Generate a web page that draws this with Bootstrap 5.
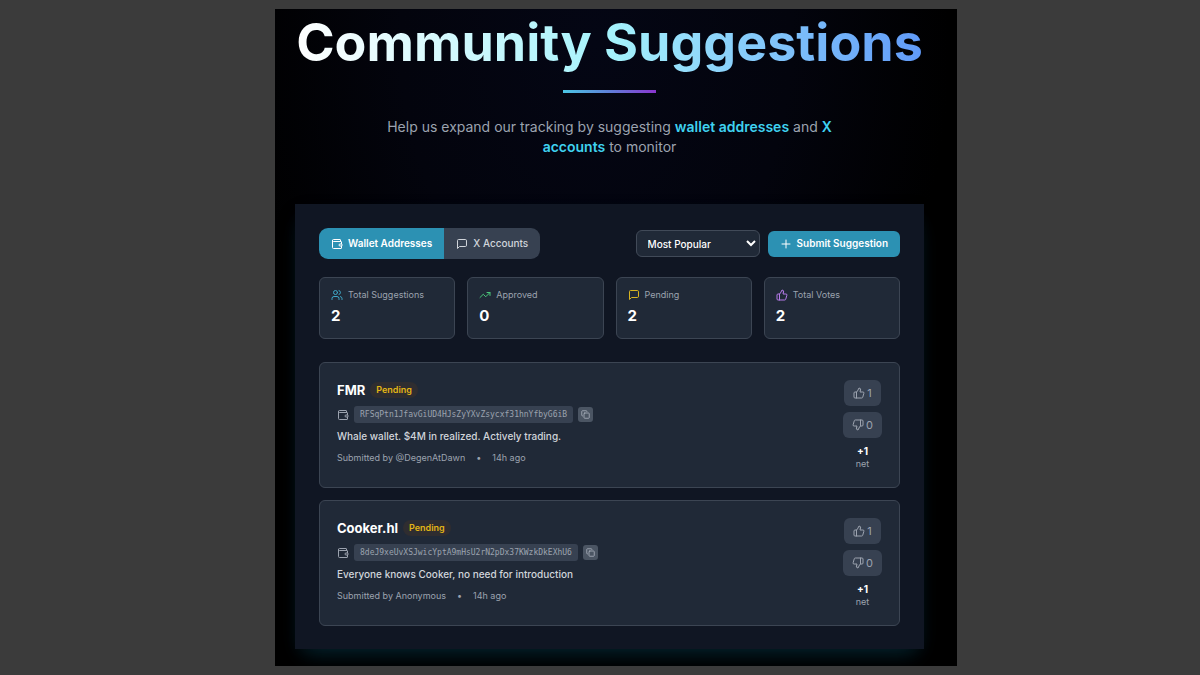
<!DOCTYPE html>
<html lang="en">
<head>
<meta charset="utf-8">
<meta name="viewport" content="width=device-width, initial-scale=1">
<title>Community Suggestions</title>
<link href="https://cdn.jsdelivr.net/npm/bootstrap@5.3.0/dist/css/bootstrap.min.css" rel="stylesheet">
<style>
  :root { --edge: #3c4553; --surface: #202937; --raised: #374151; --muted: #9ca3af; --accent: #2c91b3; }
  body { background: #3b3b3b; font-family: Inter, "Liberation Sans", sans-serif; padding: 9px 0 8px 32px; color: #fff; }
  .stage { max-width: 682px; padding: 0 33px 17px 20px; background: #000 radial-gradient(ellipse 52% 75% at 47% 5%, #040614 0%, #03040d 55%, #000 100%); overflow: hidden; }
  .hero-title { font-size: 52px; line-height: 68px; font-weight: 700; white-space: nowrap; background: linear-gradient(to right, #fff 0%, #a5f3fc 50%, #609af8 100%); -webkit-background-clip: text; background-clip: text; color: transparent; }
  .rule { width: 93px; height: 3px; margin-top: 13px; background: linear-gradient(to right, #4bc6e4, #5f7fd8 50%, #8a35cf); }
  .intro { max-width: 480px; margin-top: 24px; margin-bottom: 47px; font-size: 14px; line-height: 20px; color: var(--muted); }
  .intro strong { font-weight: 600; color: #3fd2f0; }
  .panel { background: #101623; padding: 24px 24px 23px; box-shadow: 0 12px 22px -10px rgba(12, 74, 90, .45), 0 8px 18px -4px rgba(6, 40, 58, .35); }
  .ico { width: 12px; height: 12px; flex: none; fill: none; stroke: currentColor; stroke-width: 2; stroke-linecap: round; stroke-linejoin: round; }
  .with-icon { display: flex; align-items: center; gap: 5px; }
  .tabs { border-radius: 9px; overflow: hidden; }
  .tabs .btn { border: 0; border-radius: 0; height: 31px; padding: 0 12px; font-size: 10px; font-weight: 500; background: var(--raised); color: #d1d5db; }
  .tabs .btn.active { background: var(--accent); color: #fff; font-weight: 600; }
  .sorter { width: 124px; height: 27px; padding: 0 0 0 7px; font-size: 10px; font-weight: 500; color: #fff; background: var(--surface); border: 1px solid #414a58; border-radius: 6px; }
  .submit { height: 26px; padding: 0 12px; border: 0; border-radius: 6px; font-size: 10px; font-weight: 600; color: #fff; background: var(--accent); }
  .tile { background: var(--surface); border: 1px solid var(--edge); border-radius: 6px; }
  .stats { gap: 12px; margin-top: 18px; margin-bottom: 23px; }
  .stat { flex: 1 1 0; height: 62px; padding: 11px; }
  .stat-name { font-size: 9px; line-height: 12px; color: var(--muted); }
  .stat-value { font-size: 15px; line-height: 20px; font-weight: 700; margin-top: 5px; }
  .users-tint { color: #3fa9c9; } .approved-tint { color: #4ac77a; } .pending-tint { color: #d8b420; } .votes-tint { color: #b47be8; } .wallet-tint { color: #9ca3af; }
  .entries { gap: 12px; }
  .entry { padding: 17px; min-height: 126px; color: #fff; }
  .entry h2 { font-size: 13px; line-height: 20px; font-weight: 700; }
  .state { font-size: 9px; line-height: 12px; font-weight: 600; padding: 2px 6px; border-radius: 9px; color: #e3b515; background: #2f2d30; }
  .addr-row { margin-top: 6px; }
  .addr { font: 8px/17px "DejaVu Sans Mono", monospace; color: var(--muted); background: var(--raised); border-radius: 3px; padding: 0 6px; }
  .copy { width: 15px; height: 15px; border: 0; padding: 0; border-radius: 3px; background: #4b5563; color: #b3bac5; }
  .copy .ico { width: 9px; height: 9px; }
  .note { font-size: 10px; line-height: 16px; font-weight: 500; color: #d1d5db; margin-top: 5px; }
  .meta { font-size: 9px; line-height: 12px; color: var(--muted); gap: 11px; margin-top: 8px; }
  .votes { width: 39px; }
  .vote { height: 26px; padding: 0 9px; margin-bottom: 6px; border: 0; border-radius: 6px; font-size: 11px; background: var(--raised); color: var(--muted); gap: 2px; }
  .net { font-size: 10px; line-height: 14px; font-weight: 700; }
  .net-name { font-size: 9px; line-height: 12px; color: var(--muted); }
</style>
</head>
<body>
<svg class="d-none" aria-hidden="true">
  <symbol id="wallet" viewBox="0 0 24 24"><path d="M19 7V4a1 1 0 0 0-1-1H5a2 2 0 0 0 0 4h15a1 1 0 0 1 1 1v4h-3a2 2 0 0 0 0 4h3a1 1 0 0 0 1-1v-2a1 1 0 0 0-1-1"/><path d="M3 5v14a2 2 0 0 0 2 2h15a1 1 0 0 0 1-1v-4"/></symbol>
  <symbol id="message" viewBox="0 0 24 24"><path d="M21 15a2 2 0 0 1-2 2H7l-4 4V5a2 2 0 0 1 2-2h14a2 2 0 0 1 2 2z"/></symbol>
  <symbol id="plus" viewBox="0 0 24 24"><path d="M4 12h16M12 4v16"/></symbol>
  <symbol id="users" viewBox="0 0 24 24"><path d="M16 21v-2a4 4 0 0 0-4-4H6a4 4 0 0 0-4 4v2"/><circle cx="9" cy="7" r="4"/><path d="M22 21v-2a4 4 0 0 0-3-3.87M16 3.13a4 4 0 0 1 0 7.75"/></symbol>
  <symbol id="trend" viewBox="0 0 24 24"><path d="m22 7-8.500 8.500-5-5L2 17"/><path d="M16 7h6v6"/></symbol>
  <symbol id="up" viewBox="0 0 24 24"><path d="M7 10v12"/><path d="M15 5.880 14 10h5.830a2 2 0 0 1 1.920 2.560l-2.330 8A2 2 0 0 1 17.500 22H4a2 2 0 0 1-2-2v-8a2 2 0 0 1 2-2h2.760a2 2 0 0 0 1.790-1.110L12 2a3.130 3.130 0 0 1 3 3.880Z"/></symbol>
  <symbol id="down" viewBox="0 0 24 24"><path d="M17 14V2"/><path d="M9 18.120 10 14H4.170a2 2 0 0 1-1.920-2.560l2.330-8A2 2 0 0 1 6.500 2H20a2 2 0 0 1 2 2v8a2 2 0 0 1-2 2h-2.760a2 2 0 0 0-1.790 1.110L12 22a3.130 3.130 0 0 1-3-3.880Z"/></symbol>
  <symbol id="copy" viewBox="0 0 24 24"><rect x="8" y="8" width="14" height="14" rx="2"/><path d="M4 16a2 2 0 0 1-2-2V4a2 2 0 0 1 2-2h10a2 2 0 0 1 2 2"/></symbol>
</svg>

<main class="stage mx-auto">
  <header class="text-center d-flex flex-column align-items-center">
    <h1 class="hero-title mb-0">Community Suggestions</h1>
    <div class="rule"></div>
    <p class="intro">Help us expand our tracking by suggesting <strong>wallet addresses</strong> and <strong>X accounts</strong> to monitor</p>
  </header>

  <section class="panel">
    <div class="d-flex flex-wrap justify-content-between align-items-center gap-2">
      <div class="tabs d-flex">
        <button type="button" class="btn active with-icon"><svg class="ico"><use href="#wallet"/></svg>Wallet Addresses</button>
        <button type="button" class="btn with-icon"><svg class="ico"><use href="#message"/></svg>X Accounts</button>
      </div>
      <div class="d-flex align-items-center gap-2">
        <select class="sorter" aria-label="Sort suggestions"><option>Most Popular</option><option>Newest</option></select>
        <button type="button" class="submit btn with-icon"><svg class="ico"><use href="#plus"/></svg>Submit Suggestion</button>
      </div>
    </div>

    <div class="stats d-flex">
      <div class="stat tile">
        <div class="stat-name with-icon"><svg class="ico users-tint"><use href="#users"/></svg>Total Suggestions</div>
        <div class="stat-value">2</div>
      </div>
      <div class="stat tile">
        <div class="stat-name with-icon"><svg class="ico approved-tint"><use href="#trend"/></svg>Approved</div>
        <div class="stat-value">0</div>
      </div>
      <div class="stat tile">
        <div class="stat-name with-icon"><svg class="ico pending-tint"><use href="#message"/></svg>Pending</div>
        <div class="stat-value">2</div>
      </div>
      <div class="stat tile">
        <div class="stat-name with-icon"><svg class="ico votes-tint"><use href="#up"/></svg>Total Votes</div>
        <div class="stat-value">2</div>
      </div>
    </div>

    <div class="entries d-flex flex-column">
      <article class="entry tile d-flex justify-content-between">
        <div>
          <div class="with-icon"><h2 class="mb-0">FMR</h2><span class="state">Pending</span></div>
          <div class="addr-row with-icon"><svg class="ico wallet-tint"><use href="#wallet"/></svg><code class="addr">RFSqPtn1JfavGiUD4HJsZyYXvZsycxf31hnYfbyG6iB</code><button type="button" class="copy d-flex align-items-center justify-content-center" aria-label="Copy address"><svg class="ico"><use href="#copy"/></svg></button></div>
          <p class="note mb-0">Whale wallet. $4M in realized. Actively trading.</p>
          <div class="meta d-flex"><span>Submitted by @DegenAtDawn</span><span>•</span><span>14h ago</span></div>
        </div>
        <div class="votes d-flex flex-column align-items-center">
          <button type="button" class="vote btn d-flex align-items-center" aria-label="Upvote"><svg class="ico"><use href="#up"/></svg>1</button>
          <button type="button" class="vote btn d-flex align-items-center" aria-label="Downvote"><svg class="ico"><use href="#down"/></svg>0</button>
          <div class="net">+1</div><div class="net-name">net</div>
        </div>
      </article>
      <article class="entry tile d-flex justify-content-between">
        <div>
          <div class="with-icon"><h2 class="mb-0">Cooker.hl</h2><span class="state">Pending</span></div>
          <div class="addr-row with-icon"><svg class="ico wallet-tint"><use href="#wallet"/></svg><code class="addr">8deJ9xeUvXSJwicYptA9mHsU2rN2pDx37KWzkDkEXhU6</code><button type="button" class="copy d-flex align-items-center justify-content-center" aria-label="Copy address"><svg class="ico"><use href="#copy"/></svg></button></div>
          <p class="note mb-0">Everyone knows Cooker, no need for introduction</p>
          <div class="meta d-flex"><span>Submitted by Anonymous</span><span>•</span><span>14h ago</span></div>
        </div>
        <div class="votes d-flex flex-column align-items-center">
          <button type="button" class="vote btn d-flex align-items-center" aria-label="Upvote"><svg class="ico"><use href="#up"/></svg>1</button>
          <button type="button" class="vote btn d-flex align-items-center" aria-label="Downvote"><svg class="ico"><use href="#down"/></svg>0</button>
          <div class="net">+1</div><div class="net-name">net</div>
        </div>
      </article>
    </div>
  </section>
</main>
<script src="https://cdn.jsdelivr.net/npm/bootstrap@5.3.0/dist/js/bootstrap.bundle.min.js"></script>
</body>
</html>
